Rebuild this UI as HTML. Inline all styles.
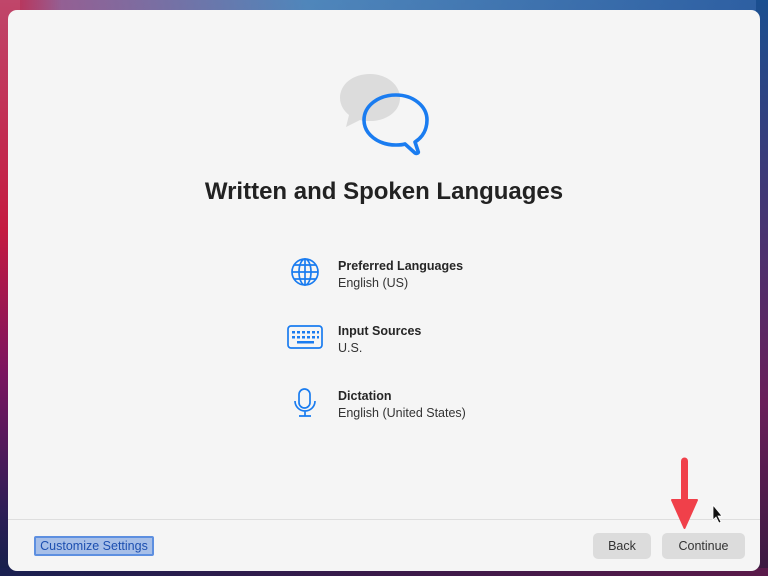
<!DOCTYPE html>
<html><head><meta charset="utf-8"><style>
*{margin:0;padding:0;box-sizing:border-box}
body{width:768px;height:576px;overflow:hidden;position:relative;font-family:"Liberation Sans",sans-serif;
background:linear-gradient(180deg,#3f6fa8 0%,#5a3a7a 60%,#2a1e50 100%);}
.bg{position:absolute;inset:0;background:
linear-gradient(90deg,rgba(200,30,60,.85) 0%,rgba(200,30,60,0) 8%),
linear-gradient(90deg,rgba(190,80,130,.8) 0%,rgba(90,150,200,.6) 40%,rgba(40,90,160,.8) 100%);}
.bg2{position:absolute;left:0;top:0;width:20px;height:576px;background:linear-gradient(180deg,#c0466a 0%,#c41a40 40%,#7a1560 65%,#2a1e55 90%,#15204a 100%)}
.bg3{position:absolute;right:0;top:0;width:12px;height:576px;background:linear-gradient(180deg,#1a4f90 0%,#6a1e5a 70%,#3a1a40 100%)}
.bg4{position:absolute;left:0;bottom:0;width:768px;height:8px;background:linear-gradient(90deg,#1a2050,#3a1a4a,#5a1a4a)}
.win{position:absolute;left:8px;top:10px;width:752px;height:561px;background:#f5f5f5;border-radius:9px;overflow:hidden}
h1{position:absolute;top:178px;left:0;width:768px;text-align:center;font-size:24px;font-weight:bold;color:#222;}
.row{position:absolute;left:286px}
.t{position:absolute;left:52px;font-size:12.5px;font-weight:bold;color:#262626;white-space:nowrap}
.s{position:absolute;left:52px;font-size:12.5px;color:#333;white-space:nowrap}
.sep{position:absolute;left:0;top:509px;width:752px;height:1px;background:#dedede}
.cust{position:absolute;left:26px;top:526px;width:120px;height:20px;background:#a7bfe8;border:2px solid #5d8fe0;border-radius:2px;color:#1d4fb0;font-size:12.5px;text-align:center;line-height:16px}
.btn{position:absolute;top:523px;height:26px;background:#dcdcdc;border-radius:5px;color:#333;font-size:12.5px;text-align:center;line-height:26px}
</style></head><body>
<div class="bg"></div><div class="bg2"></div><div class="bg3"></div><div class="bg4"></div>
<div class="win">
<div class="sep"></div>
<div class="cust">Customize Settings</div>
<div class="btn" style="left:585px;width:58px">Back</div>
<div class="btn" style="left:654px;width:83px">Continue</div>
</div>
<svg style="position:absolute;left:0;top:0" width="768" height="576">
<path d="M370 74c-17 0-30 10-30 24 0 7 4 13 9 17l-3 12 14-7c3 1 7 1 10 1 17 0 30-10 30-23s-13-24-30-24z" fill="#dcdcdc"/>
<path d="M396 95c-18 0-32 11-32 25s14 25 32 25c3 0 6 0 9-1l10 9c2 1 4 0 3-2l-3-9c8-5 12-13 12-22 0-14-14-25-31-25z" fill="none" stroke="#1a7cf0" stroke-width="3.6" stroke-linejoin="round"/>
<g fill="none" stroke="#1a7cf0" stroke-width="1.7">
<circle cx="305" cy="272" r="13"/><ellipse cx="305" cy="272" rx="6" ry="13"/><line x1="305" y1="259" x2="305" y2="285"/>
<line x1="292" y1="272" x2="318" y2="272"/><path d="M294 265h22M294 279h22"/>
<rect x="288" y="326" width="34" height="22" rx="3"/>
<rect x="299" y="389" width="11" height="19" rx="5.5"/><path d="M295 401a10 10 0 0 0 20 0M305 411v5M299 416h12"/>
</g>
<g fill="#1a7cf0">
<rect x="292" y="331" width="3" height="2.5"/><rect x="297" y="331" width="3" height="2.5"/><rect x="302" y="331" width="3" height="2.5"/><rect x="307" y="331" width="3" height="2.5"/><rect x="312" y="331" width="3" height="2.5"/><rect x="317" y="331" width="2" height="2.5"/>
<rect x="292" y="336" width="3" height="2.5"/><rect x="297" y="336" width="3" height="2.5"/><rect x="302" y="336" width="3" height="2.5"/><rect x="307" y="336" width="3" height="2.5"/><rect x="312" y="336" width="3" height="2.5"/><rect x="317" y="336" width="2" height="2.5"/>
<rect x="297" y="341" width="17" height="2.5"/>
</g>
<line x1="684.5" y1="461" x2="684.5" y2="502" stroke="#f0404a" stroke-width="7" stroke-linecap="round"/>
<path d="M672 500 L697 500 L684.5 528 Z" fill="#f0404a" stroke="#f0404a" stroke-width="2" stroke-linejoin="round"/>
<path d="M713 505 L713 520 L716 517 L719 523 L721 522 L718 516 L722 516 Z" fill="#111" stroke="#fff" stroke-width=".8"/>
</svg>
<h1>Written and Spoken Languages</h1>
<div class="row" style="top:258px"><div class="t" style="top:1px">Preferred Languages</div><div class="s" style="top:18px">English (US)</div></div>
<div class="row" style="top:323px"><div class="t" style="top:1px">Input Sources</div><div class="s" style="top:18px">U.S.</div></div>
<div class="row" style="top:388px"><div class="t" style="top:1px">Dictation</div><div class="s" style="top:18px">English (United States)</div></div>
</body></html>
